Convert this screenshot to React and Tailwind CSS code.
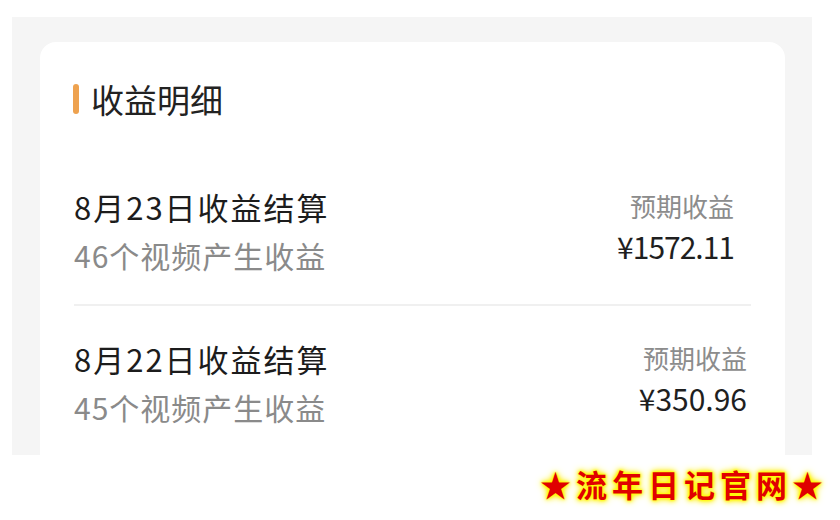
const rows = [
  { date: "8月23日收益结算", count: "46个视频产生收益", amount: "¥1572.11", pad: "pr-[17px]", amt: "tracking-[-1px]" },
  { date: "8月22日收益结算", count: "45个视频产生收益", amount: "¥350.96", pad: "pr-[4px]", amt: "tracking-[0px]" },
];

const font = { fontFamily: '"Noto Sans CJK SC", "Noto Sans", sans-serif' };

export default function App() {
  return (
    <div className="w-[840px] h-[520px] bg-white overflow-hidden pt-[17px] pl-[12px]" style={font}>
      {/* gray page area */}
      <div className="w-[800px] h-[438px] bg-[#f5f5f5] pt-[25px] pl-[28px] overflow-hidden">
        <div className="w-[745px] h-[413px] bg-white rounded-t-[16px] pt-[40px] px-[34px]">
          {/* heading */}
          <div className="flex items-center h-[34px]">
            <span className="w-[6px] h-[30px] rounded-full bg-[#eea24f] -ml-[1px] mr-[12px]" />
            <span className="text-[33px] leading-[34px] text-[#222]">收益明细</span>
          </div>

          <div className="mt-[38px]">
            {rows.map((r, i) => (
              <div
                key={i}
                className={`flex justify-between pt-[37px] pb-[34px] ${
                  i === 0 ? "border-b-2 border-[#f0f0f0]" : ""
                }`}
              >
                <div className="flex flex-col">
                  <span className="text-[31px] leading-[31px] text-[#1c1c1c] tracking-[2px]">{r.date}</span>
                  <span className="text-[30px] leading-[30px] text-[#8a8a8a] mt-[18px] tracking-[1px]">
                    {r.count}
                  </span>
                </div>
                <div className={`flex flex-col items-end ${r.pad}`}>
                  <span className="text-[26px] leading-[26px] text-[#8c8c8c] mt-[2px]">预期收益</span>
                  <span className={`text-[30px] leading-[30px] text-[#1f1f1f] mt-[12px] ${r.amt}`}>
                    {r.amount}
                  </span>
                </div>
              </div>
            ))}
          </div>
        </div>
      </div>

      {/* watermark */}
      <div className="flex justify-end pr-[12px] mt-[12px]">
        <span
          className="text-[31px] leading-[34px] font-bold text-[#e00000] tracking-[5px]"
          style={{
            textShadow:
              "0 0 2px #ffff00, 0 0 3px #ffff00, 0 0 4px #ffff00, 0 0 6px #ffe600, 0 0 8px #fff200",
          }}
        >
          ★流年日记官网★
        </span>
      </div>
    </div>
  );
}
